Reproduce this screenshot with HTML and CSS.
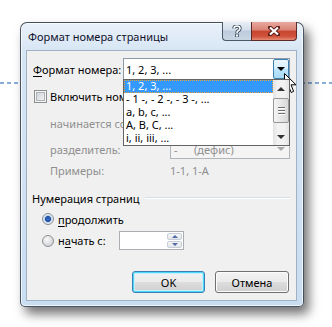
FILE: index.html
```html
<!DOCTYPE html>
<html lang="ru">
<head>
    <meta charset="UTF-8">
    <title>Формат номера страницы</title>
    <link rel="stylesheet" href="styles.css">
</head>
<body>
    <div class="window">
        <div class="titlebar">
            <span class="title">Формат номера страницы</span>
            <div class="caption">
                <div class="cap-btn cap-help">
                    <svg width="10" height="12" viewBox="0 0 10 12">
                        <path d="M2 3.5 Q2 1 5 1 Q8 1 8 3.5 Q8 5 6 6 Q5 6.5 5 8" fill="none" stroke="#3a4a5c" stroke-width="3.4"/>
                        <path d="M2 3.5 Q2 1 5 1 Q8 1 8 3.5 Q8 5 6 6 Q5 6.5 5 8" fill="none" stroke="#fff" stroke-width="1.6"/>
                        <rect x="3.5" y="9" width="3" height="3" fill="#fff" stroke="#3a4a5c" stroke-width="0.8"/>
                    </svg>
                </div>
                <div class="cap-btn cap-close">
                    <svg width="12" height="10" viewBox="0 0 12 10">
                        <path d="M2 1.5 L10 8.5 M10 1.5 L2 8.5" stroke="#5a1d18" stroke-width="4" stroke-linecap="square"/>
                        <path d="M2 1.5 L10 8.5 M10 1.5 L2 8.5" stroke="#fff" stroke-width="2.2"/>
                    </svg>
                </div>
            </div>
        </div>
        <div class="client">
            <div class="row row-format">
                <label class="lbl-main"><u>Ф</u>ормат номера:</label>
                <div class="combo">
                    <span class="combo-text">1, 2, 3, ...</span>
                    <span class="drop-btn hot"><i class="tri"></i></span>
                    <div class="droplist">
                        <ul class="items">
                            <li class="selected">1, 2, 3, ...</li>
                            <li>- 1 -, - 2 -, - 3 -, ...</li>
                            <li>a, b, c, ...</li>
                            <li>A, B, C, ...</li>
                            <li>i, ii, iii, ...</li>
                        </ul>
                        <div class="scrollbar">
                            <span class="sb-arrow"><i class="tri-up"></i></span>
                            <span class="sb-thumb"><i></i><i></i><i></i></span>
                            <span class="sb-arrow"><i class="tri-down"></i></span>
                        </div>
                    </div>
                </div>
            </div>
            <div class="row row-check">
                <span class="checkbox"></span>
                <span>Включить номер главы</span>
            </div>
            <div class="row row-sub disabled">
                <span>начинается со стиля</span>
            </div>
            <div class="row row-sep disabled">
                <span class="lbl-sub">разделитель:</span>
                <div class="combo combo-off">
                    <span class="sep-dash">-</span>
                    <span>(дефис)</span>
                    <span class="drop-btn"><i class="tri"></i></span>
                </div>
            </div>
            <div class="row row-ex disabled">
                <span class="lbl-sub">Примеры:</span>
                <span>1-1, 1-А</span>
            </div>
            <div class="row row-group">
                <span>Нумерация страниц</span>
                <span class="group-line"></span>
            </div>
            <div class="row row-radio1">
                <span class="radio checked"></span>
                <span><u>п</u>родолжить</span>
            </div>
            <div class="row row-radio2">
                <label class="radio-lbl"><span class="radio"></span><span>н<u>а</u>чать с:</span></label>
                <div class="spin">
                    <span class="spin-btns">
                        <span class="spin-btn"><i class="tri-up small"></i></span>
                        <span class="spin-btn"><i class="tri-down small"></i></span>
                    </span>
                </div>
            </div>
            <div class="row row-buttons">
                <button class="btn btn-default">OK</button>
                <button class="btn">Отмена</button>
            </div>
        </div>
    </div>

    <svg class="cursor" width="13" height="21" viewBox="0 0 13 21">
        <path d="M0.5 0.5 V16.5 L4.5 12.8 L7.2 19.5 L9.6 18.4 L7 11.8 H12 Z" fill="#fff" stroke="#000" stroke-width="1" stroke-linejoin="miter"/>
    </svg>
</body>
</html>
```

FILE: styles.css
```css
* {
    box-sizing: border-box;
}
body {
    margin: 0;
    width: 332px;
    height: 327px;
    overflow: hidden;
    position: relative;
    background: #fff linear-gradient(to right, #8aaed8 4px, transparent 4px) 0 82px / 7px 2px repeat-x;
    font-family: "Noto Sans", sans-serif;
    font-size: 11px;
    color: #000;
}
u {
    text-decoration-thickness: 1px;
    text-underline-offset: 2px;
}

/* window frame */
.window {
    margin: 22px 0 0 20px;
    width: 284px;
    height: 285px;
    border: 1px solid rgba(35, 45, 60, 0.8);
    border-radius: 7px 7px 5px 5px;
    background: linear-gradient(#e9f1fa, #d6e5f4 30px, #c9ddf1);
    box-shadow: 5px 7px 11px rgba(0, 0, 0, 0.55), inset 0 0 0 1px rgba(255, 255, 255, 0.7);
    padding: 0 6px 5px 5px;
    display: flex;
    flex-direction: column;
}
.titlebar {
    height: 27px;
    display: flex;
    justify-content: space-between;
}
.title {
    padding-left: 2px;
    line-height: 28px;
    font-size: 11px;
    color: #10122a;
}
.caption {
    display: flex;
    margin-top: -1px;
    height: 19px;
}
.cap-btn {
    height: 19px;
    display: flex;
    align-items: center;
    justify-content: center;
    border: 1px solid #4a5868;
    border-top: none;
}
.cap-help {
    width: 29px;
    border-right: none;
    border-radius: 0 0 0 4px;
    background: linear-gradient(#e8eef6, #d3dde9 45%, #bccbdc 50%, #c9d6e4);
}
.cap-close {
    width: 46px;
    border-color: #5e2a26;
    border-radius: 0 0 4px 0;
    background: linear-gradient(#e9a99f, #d98475 45%, #c8452f 50%, #d0523c 80%, #e58c74);
}

/* client area */
.client {
    flex: 1;
    background: #f0f0f0;
    border: 1px solid #9fb1c4;
    padding: 7px 6px 0 6px;
    display: flex;
    flex-direction: column;
}
.row {
    display: flex;
    align-items: center;
    height: 14px;
    white-space: nowrap;
}
.disabled {
    color: #8f8f8f;
}
.lbl-main {
    width: 90px;
}
.lbl-sub {
    width: 120px;
}
.row-format {
    height: 22px;
}
.row-check {
    margin-top: 9px;
    gap: 3px;
}
.row-sub {
    margin-top: 13px;
    padding-left: 17px;
}
.row-sep {
    margin-top: 9px;
    height: 20px;
    padding-left: 17px;
}
.row-ex {
    margin-top: 4px;
    padding-left: 17px;
}
.row-group {
    margin-top: 14px;
    margin-left: -1px;
    gap: 5px;
}
.row-radio1 {
    margin-top: 7px;
    padding-left: 9px;
    gap: 4px;
}
.row-radio2 {
    margin-top: 5px;
    height: 19px;
    padding-left: 9px;
}
.row-buttons {
    margin-top: 21px;
    height: 22px;
    justify-content: flex-end;
    gap: 10px;
    padding-right: 1px;
}

/* combo boxes */
.combo {
    position: relative;
    width: 167px;
    height: 22px;
    border: 1px solid #8c9aa8;
    background: #fff;
    display: flex;
    align-items: center;
}
.combo-text {
    padding-left: 2px;
}
.drop-btn {
    position: absolute;
    right: 0;
    top: 0;
    width: 16px;
    height: 100%;
    display: flex;
    align-items: center;
    justify-content: center;
}
.drop-btn.hot {
    border: 1px solid #3c7fb1;
    border-radius: 2px;
    background: linear-gradient(#eaf6fd, #d9f0fc 45%, #bee6fd 50%, #a7d9f5);
}
.tri {
    width: 0;
    height: 0;
    border-left: 4px solid transparent;
    border-right: 4px solid transparent;
    border-top: 4px solid #000;
}
.combo-off {
    width: 120px;
    height: 20px;
    border-color: #b0b5ba;
    background: #f4f4f4;
    padding-left: 3px;
}
.combo-off .sep-dash {
    width: 20px;
}
.combo-off .tri {
    border-top-color: #a8a8a8;
}

/* open list, drawn over the rows below */
.droplist {
    position: absolute;
    left: -1px;
    top: 20px;
    width: 167px;
    border: 1px solid #646464;
    background: #fff;
    display: flex;
    z-index: 2;
}
.items {
    list-style: none;
    margin: 0;
    padding: 0;
    flex: 1;
}
.items li {
    height: 13px;
    line-height: 12px;
    padding-left: 2px;
    color: #000;
}
.items li.selected {
    background: #3399ff;
    color: #fff;
    outline: 1px dotted #e8a23a;
    outline-offset: -1px;
}
.scrollbar {
    width: 16px;
    display: flex;
    flex-direction: column;
    background: linear-gradient(to right, #e3e3e3, #f2f2f2 30%, #f2f2f2 70%, #e3e3e3);
}
.sb-arrow {
    height: 17px;
    display: flex;
    align-items: center;
    justify-content: center;
}
.sb-thumb {
    margin-top: 1px;
    height: 25px;
    border: 1px solid #979797;
    border-radius: 2px;
    background: linear-gradient(to right, #f5f5f5, #e6e6e6 50%, #d8d8d8);
    display: flex;
    flex-direction: column;
    align-items: center;
    justify-content: center;
    gap: 1px;
}
.sb-thumb i {
    width: 7px;
    height: 2px;
    border-top: 1px solid #6e6e6e;
    border-bottom: 1px solid #fff;
}
.sb-arrow:last-child {
    margin-top: auto;
}
.tri-up,
.tri-down {
    width: 0;
    height: 0;
    border-left: 4px solid transparent;
    border-right: 4px solid transparent;
}
.tri-up {
    border-bottom: 4px solid #333;
}
.tri-down {
    border-top: 4px solid #333;
}
.tri-up.small {
    border-width: 0 3px 3px;
    border-bottom-color: #4e6ba5;
}
.tri-down.small {
    border-width: 3px 3px 0;
    border-top-color: #4e6ba5;
}

/* check and radio */
.checkbox {
    width: 13px;
    height: 13px;
    margin-left: 1px;
    border: 1px solid #8e8f8f;
    box-shadow: inset 0 0 0 1px #f4f4f4, inset 0 0 0 2px #aeb3b9;
    background: linear-gradient(135deg, #cbcfd5, #f6f6f6);
}
.radio {
    width: 12px;
    height: 12px;
    border-radius: 50%;
    border: 1px solid #8e8f8f;
    background: radial-gradient(circle at 40% 35%, #fafafa, #d3d6da 70%);
}
.radio.checked {
    background: radial-gradient(circle, #3c74c9 0, #1f4f9e 2.6px, #bdd3ee 3.4px, #e9f0f8 5px);
}

/* group heading */
.group-line {
    flex: 1;
    height: 2px;
    border-top: 1px solid #d5dfe5;
    border-bottom: 1px solid #fff;
}

/* spin edit */
.radio-lbl {
    width: 77px;
    display: flex;
    align-items: center;
    gap: 4px;
}
.spin {
    width: 65px;
    height: 19px;
    border: 1px solid #abadb3;
    background: #fff;
    display: flex;
    justify-content: flex-end;
    padding: 1px;
}
.spin-btns {
    width: 15px;
    display: flex;
    flex-direction: column;
    gap: 1px;
}
.spin-btn {
    flex: 1;
    border: 1px solid #c5ced8;
    border-radius: 2px;
    background: linear-gradient(#f6f6f6, #e4e6ea);
    display: flex;
    align-items: center;
    justify-content: center;
}

/* buttons */
.btn {
    width: 74px;
    height: 22px;
    font-family: inherit;
    font-size: 11px;
    color: #000;
    border: 1px solid #707070;
    border-radius: 3px;
    background: linear-gradient(#f2f2f2, #ebebeb 48%, #dddddd 50%, #cfcfcf);
    box-shadow: inset 0 0 0 1px #fcfcfc;
    padding: 0;
}
.btn-default {
    width: 73px;
    border-color: #3c7fb1;
    box-shadow: inset 0 0 0 1px #48d8fb, inset 0 0 0 2px #c8eefb;
}

.cursor {
    position: absolute;
    left: 284px;
    top: 73px;
}
```
